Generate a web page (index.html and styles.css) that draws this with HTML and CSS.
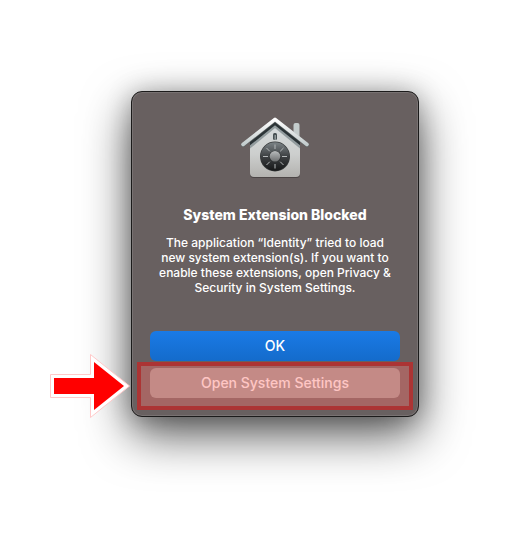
FILE: index.html
```html
<!DOCTYPE html>
<html lang="en">
  <head>
    <meta charset="UTF-8" />
    <meta name="viewport" content="width=device-width, initial-scale=1.0" />
    <title>System Extension Blocked</title>
    <link rel="stylesheet" href="styles.css">
  </head>
  <body>
    <main class="dialog" role="alertdialog" aria-labelledby="dialog-title" aria-describedby="dialog-message">
      <svg class="dialog-icon" viewBox="11 12 68 64" aria-hidden="true">
        <defs>
          <linearGradient id="wall" x1="0" y1="0" x2="0" y2="1">
            <stop offset="0" stop-color="#d8dfe0" />
            <stop offset="0.6" stop-color="#cdcfce" />
            <stop offset="1" stop-color="#b3b2af" />
          </linearGradient>
          <linearGradient id="dial" x1="0" y1="0" x2="0" y2="1">
            <stop offset="0" stop-color="#7b8386" />
            <stop offset="0.5" stop-color="#3d4042" />
            <stop offset="1" stop-color="#161718" />
          </linearGradient>
          <linearGradient id="knob" x1="0" y1="0" x2="0" y2="1">
            <stop offset="0" stop-color="#b9bcbd" />
            <stop offset="1" stop-color="#6c6e6f" />
          </linearGradient>
          <linearGradient id="roof" x1="0" y1="0" x2="0" y2="1">
            <stop offset="0" stop-color="#ffffff" />
            <stop offset="1" stop-color="#c3cccd" />
          </linearGradient>
          <clipPath id="house">
            <path d="M45 16 L70 36 V68 Q70 72 66 72 H24 Q20 72 20 68 V36 Z" />
          </clipPath>
        </defs>
        <rect x="20" y="66" width="50" height="7" rx="4" fill="#4b4545" />
        <rect x="63.5" y="18" width="6" height="20" rx="2" fill="#c4cccc" />
        <g clip-path="url(#house)">
          <rect x="20" y="14" width="50" height="58" fill="url(#wall)" />
          <path d="M14 44 L45 18.5 L76 44" fill="none" stroke="#939d9f" stroke-width="7" />
          <path d="M14 42 L45 17 L76 42" fill="none" stroke="#2b3437" stroke-width="5" />
        </g>
        <path d="M13 40 L45 15 L77 40" fill="none" stroke="#5d6363" stroke-width="4" stroke-linecap="round" stroke-linejoin="round" />
        <path d="M13 39.5 L45 14.3 L77 39.5" fill="none" stroke="url(#roof)" stroke-width="3.6" stroke-linecap="round" stroke-linejoin="round" />
        <rect x="43" y="28" width="4" height="7" rx="1.5" fill="#465052" />
        <rect x="44.5" y="30" width="1.5" height="5" fill="#8c9698" />
        <circle cx="45" cy="51.5" r="15" fill="#36393a" />
        <circle cx="45" cy="51.5" r="14.3" fill="url(#dial)" />
        <g stroke="#b4b8b9" stroke-width="1">
          <path d="M45 39.5 V44 M45 59 V63.5 M33 51.5 H38 M52 51.5 H57" />
          <path d="M36.5 43 L39.8 46.3 M50.2 56.7 L53.5 60 M53.5 43 L50.2 46.3 M39.8 56.7 L36.5 60" />
        </g>
        <circle cx="45" cy="51.8" r="6" fill="#303334" />
        <circle cx="45" cy="51.3" r="5.3" fill="url(#knob)" />
      </svg>

      <h1 id="dialog-title" class="dialog-title">System Extension Blocked</h1>
      <p id="dialog-message" class="dialog-message">
        The application “Identity” tried to load new system extension(s). If you want to enable these extensions, open Privacy &amp; Security in System Settings.
      </p>

      <div class="actions">
        <button type="button" class="btn btn-primary">OK</button>
        <div class="callout">
          <button type="button" class="btn btn-secondary">Open System Settings</button>
          <span class="callout-box"></span>
          <svg class="callout-arrow" viewBox="0 0 80 64" aria-hidden="true">
            <path d="M0.5 20.5 H40.5 V0.5 L79.5 32 L40.5 63.5 V43.5 H0.5 Z" fill="#fff" stroke="#ffc9c9" stroke-width="1" />
            <path d="M4 24 H44 V8 L74 32 L44 56 V40 H4 Z" fill="#f00" />
          </svg>
        </div>
      </div>
    </main>
  </body>
</html>
```

FILE: styles.css
```css
* {
  box-sizing: border-box;
}
body {
  margin: 0;
  padding: 91px 20px 91px 41px;
  background-color: #fff;
  font-family: Inter, "Liberation Sans", sans-serif;
}
.dialog {
  display: flex;
  flex-direction: column;
  align-items: center;
  max-width: 288px;
  margin: 0 auto;
  padding: 25px 18px 18px;
  color: #fff;
  text-align: center;
  background-color: #686060;
  border: 1px solid #1c1b1b;
  border-radius: 11px;
  box-shadow: inset 0 0 0 1px #787272, 0 18px 48px rgba(0, 0, 0, 0.65), 0 2px 24px rgba(0, 0, 0, 0.25);
}
.dialog-icon {
  width: 68px;
  height: 64px;
}
.dialog-title {
  margin: 24px 0 0;
  font-size: 14px;
  font-weight: 800;
  line-height: 20px;
}
.dialog-message {
  margin: 10px 0 0;
  padding: 0 6px;
  font-size: 12px;
  font-weight: 500;
  line-height: 15px;
}
.actions {
  display: flex;
  flex-direction: column;
  gap: 7px;
  width: 100%;
  margin-top: 36px;
}
.btn {
  display: block;
  width: 100%;
  height: 30px;
  padding: 0 0 2px;
  border: none;
  border-radius: 6px;
  color: #fff;
  font-family: inherit;
  font-size: 14px;
  font-weight: 500;
  cursor: pointer;
}
.btn-primary {
  background: linear-gradient(#1a7ae6, #146bcb);
}
.btn-secondary {
  background-color: #9d9b98;
}
/* red marker around the button to press */
.callout {
  position: relative;
}
.callout-box {
  position: absolute;
  inset: -6px -13px -12px;
  border: 4px solid #ac3434;
  background-color: rgba(255, 112, 108, 0.4);
  pointer-events: none;
}
.callout-arrow {
  position: absolute;
  top: -14px;
  left: -100px;
  width: 80px;
  height: 64px;
}
```
